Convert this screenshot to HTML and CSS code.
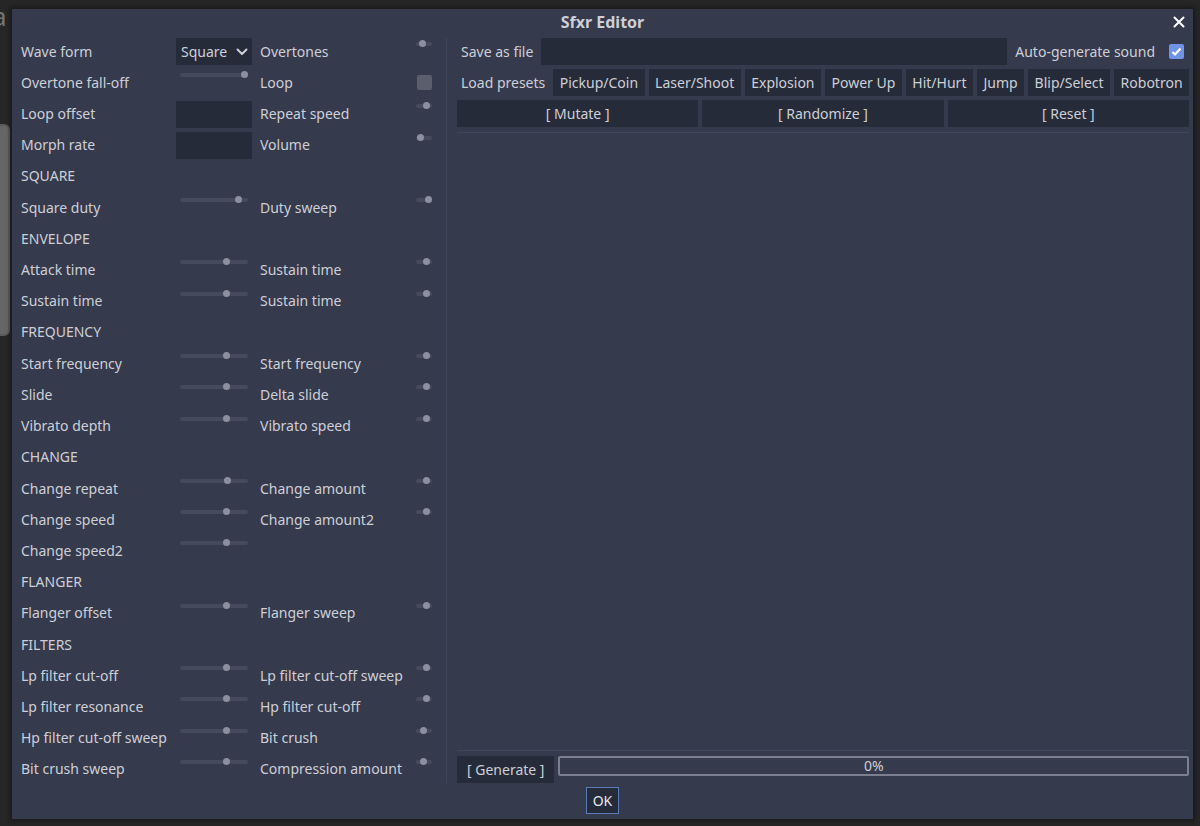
FILE: index.html
```html
<!DOCTYPE html>
<html lang="en">
<head>
    <meta charset="UTF-8">
    <meta name="viewport" content="width=device-width, initial-scale=1.0">
    <title>Sfxr Editor</title>
    <link rel="stylesheet" href="styles.css">
</head>
<body>
    <div class="backdrop" aria-hidden="true">
        <span class="backdrop-text">a</span>
        <div class="backdrop-bar"></div>
    </div>

    <main class="dialog">
        <header class="titlebar">
            <h1>Sfxr Editor</h1>
            <button class="close" aria-label="Close">
                <svg width="12" height="12" viewBox="0 0 12 12"><path d="M1.5 1.5l9 9M10.5 1.5l-9 9" fill="none" stroke="#fff" stroke-width="2" stroke-linecap="round"/></svg>
            </button>
        </header>

        <div class="content">
            <form class="params">
                <label for="wave">Wave form</label>
                <div class="select">
                    <select id="wave"><option>Square</option><option>Sawtooth</option><option>Sine</option><option>Noise</option></select>
                    <svg width="12" height="8" viewBox="0 0 12 8"><path d="M1.5 1.5L6 6l4.5-4.5" fill="none" stroke="#cdcfd7" stroke-width="2" stroke-linecap="round" stroke-linejoin="round"/></svg>
                </div>
                <label for="overtones">Overtones</label>
                <input type="range" id="overtones" value="36">

                <label for="falloff">Overtone fall-off</label>
                <input type="range" id="falloff" value="100">
                <label for="loop">Loop</label>
                <input type="checkbox" id="loop">

                <label for="loop-offset">Loop offset</label>
                <input type="text" id="loop-offset">
                <label for="repeat">Repeat speed</label>
                <input type="range" id="repeat" value="75">

                <label for="morph">Morph rate</label>
                <input type="text" id="morph">
                <label for="volume">Volume</label>
                <input type="range" id="volume" value="15">

                <h2>SQUARE</h2>

                <label for="duty">Square duty</label>
                <input type="range" id="duty" value="90">
                <label for="duty-sweep">Duty sweep</label>
                <input type="range" id="duty-sweep" value="100">

                <h2>ENVELOPE</h2>

                <label for="attack">Attack time</label>
                <input type="range" id="attack" value="70">
                <label for="sustain">Sustain time</label>
                <input type="range" id="sustain" value="75">

                <label for="sustain2">Sustain time</label>
                <input type="range" id="sustain2" value="70">
                <label for="sustain3">Sustain time</label>
                <input type="range" id="sustain3" value="75">

                <h2>FREQUENCY</h2>

                <label for="start-freq">Start frequency</label>
                <input type="range" id="start-freq" value="70">
                <label for="start-freq2">Start frequency</label>
                <input type="range" id="start-freq2" value="75">

                <label for="slide">Slide</label>
                <input type="range" id="slide" value="70">
                <label for="delta-slide">Delta slide</label>
                <input type="range" id="delta-slide" value="75">

                <label for="vib-depth">Vibrato depth</label>
                <input type="range" id="vib-depth" value="70">
                <label for="vib-speed">Vibrato speed</label>
                <input type="range" id="vib-speed" value="75">

                <h2>CHANGE</h2>

                <label for="ch-repeat">Change repeat</label>
                <input type="range" id="ch-repeat" value="72">
                <label for="ch-amount">Change amount</label>
                <input type="range" id="ch-amount" value="75">

                <label for="ch-speed">Change speed</label>
                <input type="range" id="ch-speed" value="70">
                <label for="ch-amount2">Change amount2</label>
                <input type="range" id="ch-amount2" value="75">

                <label for="ch-speed2">Change speed2</label>
                <input type="range" id="ch-speed2" value="70">

                <h2>FLANGER</h2>

                <label for="fl-offset">Flanger offset</label>
                <input type="range" id="fl-offset" value="70">
                <label for="fl-sweep">Flanger sweep</label>
                <input type="range" id="fl-sweep" value="75">

                <h2>FILTERS</h2>

                <label for="lp-cut">Lp filter cut-off</label>
                <input type="range" id="lp-cut" value="70">
                <label for="lp-sweep">Lp filter cut-off sweep</label>
                <input type="range" id="lp-sweep" value="75">

                <label for="lp-res">Lp filter resonance</label>
                <input type="range" id="lp-res" value="70">
                <label for="hp-cut">Hp filter cut-off</label>
                <input type="range" id="hp-cut" value="75">

                <label for="hp-sweep">Hp filter cut-off sweep</label>
                <input type="range" id="hp-sweep" value="70">
                <label for="crush">Bit crush</label>
                <input type="range" id="crush" value="40">

                <label for="crush-sweep">Bit crush sweep</label>
                <input type="range" id="crush-sweep" value="70">
                <label for="compression">Compression amount</label>
                <input type="range" id="compression" value="40">
            </form>

            <section class="output">
                <div class="row">
                    <label for="filename">Save as file</label>
                    <input type="text" id="filename">
                    <label for="auto">Auto-generate sound</label>
                    <input type="checkbox" id="auto" checked>
                </div>
                <div class="row presets">
                    <span>Load presets</span>
                    <button>Pickup/Coin</button>
                    <button>Laser/Shoot</button>
                    <button>Explosion</button>
                    <button>Power Up</button>
                    <button>Hit/Hurt</button>
                    <button>Jump</button>
                    <button>Blip/Select</button>
                    <button>Robotron</button>
                </div>
                <div class="row actions">
                    <button>[ Mutate ]</button>
                    <button>[ Randomize ]</button>
                    <button>[ Reset ]</button>
                </div>
                <div class="preview"></div>
                <div class="row generate">
                    <button>[ Generate ]</button>
                    <div class="progress">
                        <progress id="progress" value="0" max="100"></progress>
                        <label for="progress">0%</label>
                    </div>
                </div>
            </section>
        </div>

        <footer class="footer">
            <button class="ok">OK</button>
        </footer>
    </main>
</body>
</html>
```

FILE: styles.css
```css
* {
    box-sizing: border-box;
}
body {
    margin: 0;
    height: 100vh;
    min-height: 826px;
    padding: 9px 7px 7px 12px;
    background: #262626;
    color: #cdcfd7;
    font: 14px/20px "Noto Sans", sans-serif;
    position: relative;
}
h1, h2 {
    margin: 0;
    font-size: 14px;
    font-weight: 400;
}
button, input, select {
    font: inherit;
    color: inherit;
    margin: 0;
    border: 0;
    border-radius: 0;
}
button, select, input[type="text"] {
    background: #262b3a;
    height: 27px;
}
button {
    padding: 0 6px;
    white-space: nowrap;
}

/* editor behind the dialog */
.backdrop-text {
    position: absolute;
    left: -8px;
    top: 1px;
    font-size: 26px;
    line-height: 30px;
    color: #747474;
}
.backdrop-bar {
    position: absolute;
    left: -10px;
    top: 124px;
    width: 20px;
    height: 212px;
    border-radius: 6px;
    background: #666;
    border: 2px solid #5a5a5a;
}

.dialog {
    position: relative;
    height: 100%;
    display: flex;
    flex-direction: column;
    padding: 0 4px 5px;
    background: #363a4d;
    box-shadow: 0 0 4px 2px rgba(0, 0, 0, 0.35);
}
.titlebar {
    display: grid;
    grid-template-columns: 20px 1fr 20px;
    align-items: center;
    height: 25px;
    margin-bottom: 4px;
}
.titlebar h1 {
    grid-column: 2;
    text-align: center;
    font-size: 16px;
    font-weight: 700;
}
.close {
    display: flex;
    align-items: center;
    justify-content: center;
    height: 24px;
    padding: 0;
    background: none;
}

.content {
    flex: 1;
    display: flex;
    min-height: 0;
}
.params {
    display: grid;
    grid-template-columns: 147px 76px 144px 24px;
    grid-template-rows: repeat(24, 1fr);
    column-gap: 8px;
    row-gap: 4px;
    padding: 0 10px 0 5px;
    border-right: 1px solid #42465a;
}
.params > * {
    align-self: center;
    white-space: nowrap;
}
.params h2 {
    grid-column: 1 / -1;
}
.params input[type="text"] {
    width: 100%;
}
.select {
    display: grid;
    align-items: center;
}
.select > * {
    grid-area: 1 / 1;
}
.select select {
    appearance: none;
    width: 100%;
    padding: 0 5px;
}
.select svg {
    justify-self: end;
    margin-right: 4px;
    pointer-events: none;
}

input[type="range"] {
    appearance: none;
    align-self: start;
    height: 12px;
    margin: 0 4px;
    min-width: 0;
    background: none;
}
input[type="range"]::-webkit-slider-runnable-track {
    height: 4px;
    border-radius: 2px;
    background: #454a5c;
}
input[type="range"]::-webkit-slider-thumb {
    appearance: none;
    width: 7px;
    height: 7px;
    margin-top: -2px;
    border-radius: 50%;
    background: #8b8f9e;
}
input[type="checkbox"] {
    appearance: none;
    justify-self: center;
    width: 15px;
    height: 15px;
    border-radius: 2px;
    background: #5a5e6d;
}
input[type="checkbox"]:checked {
    background: #6f94e6 url("data:image/svg+xml,%3Csvg xmlns='http://www.w3.org/2000/svg' viewBox='0 0 15 15'%3E%3Cpath d='M3.5 8l2.500 2.500 5.500-6' fill='none' stroke='%23fff' stroke-width='2.200'/%3E%3C/svg%3E");
}

.output {
    flex: 1;
    display: flex;
    flex-direction: column;
    gap: 4px;
    padding-left: 10px;
    min-width: 0;
}
.row {
    display: flex;
    align-items: center;
    gap: 4px;
}
.row > label, .presets span {
    padding: 0 4px;
    white-space: nowrap;
}
.row input[type="text"] {
    flex: 1;
    min-width: 0;
}
.row input[type="checkbox"] {
    margin: 0 5px 0 6px;
}
.presets button {
    flex: 1 1 auto;
}
.actions button {
    flex: 1;
}
.preview {
    flex: 1;
    margin: 1px 0;
    border-top: 1px solid #42465a;
    border-bottom: 1px solid #42465a;
}
.generate {
    align-items: flex-start;
}
.generate button {
    padding: 0 10px;
}
.progress {
    flex: 1;
    display: grid;
    align-items: center;
    justify-items: center;
}
.progress > * {
    grid-area: 1 / 1;
}
progress {
    appearance: none;
    width: 100%;
    height: 20px;
    border: 2px solid #7b7f90;
    border-radius: 2px;
}
progress::-webkit-progress-bar {
    background: none;
}

.footer {
    display: flex;
    justify-content: center;
    margin-top: 4px;
}
.ok {
    border: 1px solid #5b7bb8;
    color: #e4e6ec;
}
```
